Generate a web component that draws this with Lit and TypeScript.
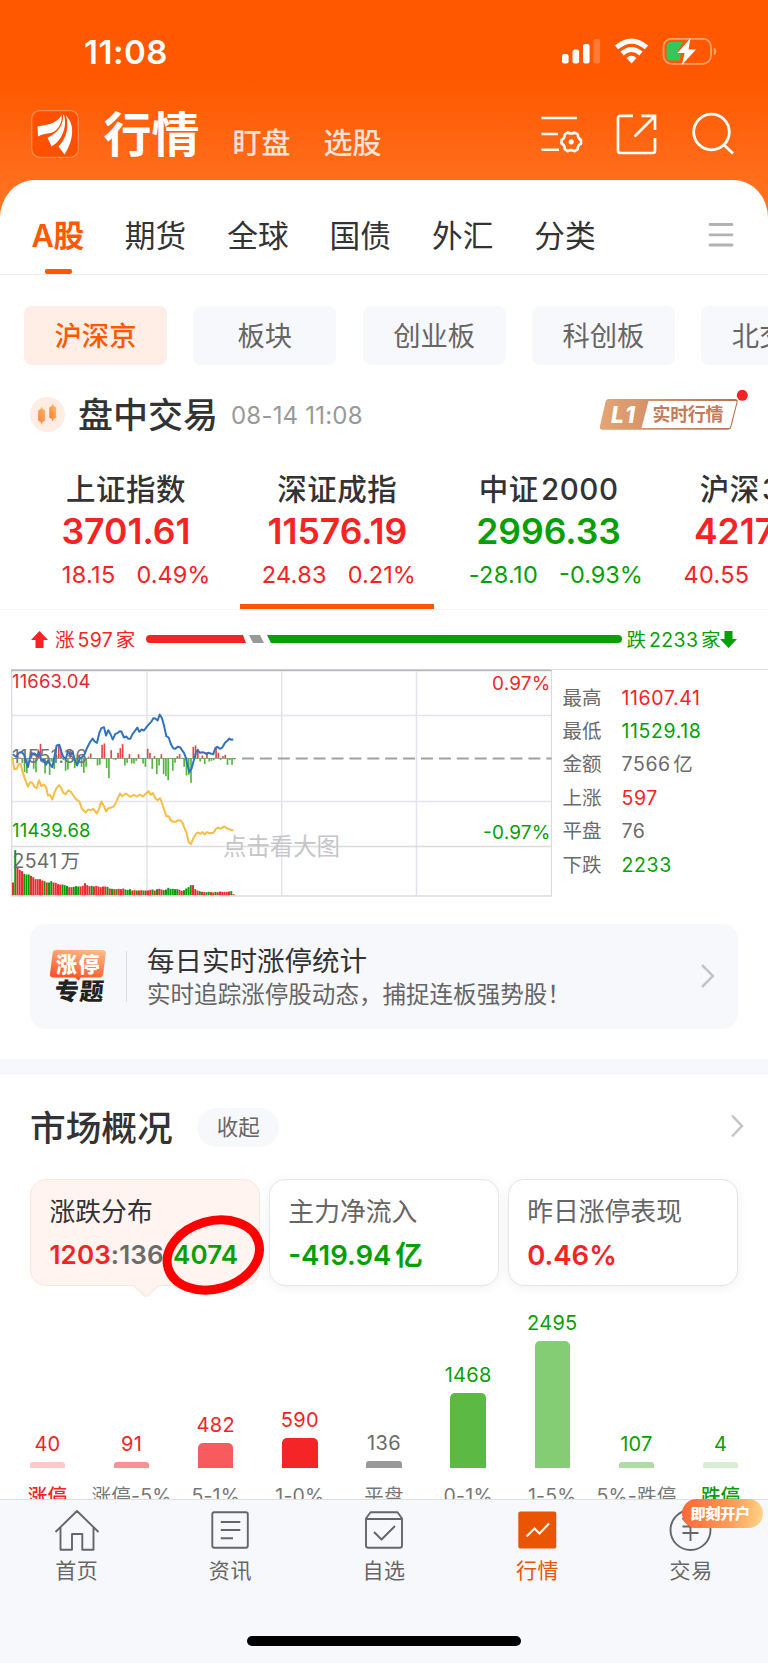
import { LitElement, html, css, svg } from "lit";
import { customElement } from "lit/decorators.js";
import { classMap } from "lit/directives/class-map.js";

const baseText = css`
  :host { display: block; font-family: Inter, "Noto Sans CJK SC", sans-serif; color: #333; }
  * { box-sizing: border-box; }
  svg { display: block; flex: none; }
  .up { color: #f52323; }
  .down { color: #06a006; }
  .flat { color: #6b6b6b; }
`;

@customElement("top-header")
class TopHeader extends LitElement {
  static styles = [baseText, css`
    .head { height: 179.5px; color: #fff; display: flex; flex-direction: column; }
    .status { height: 100px; padding: 3px 50px 0 84px; display: flex; align-items: center; justify-content: space-between; }
    .clock { font-size: 33px; font-weight: 600; line-height: 40px; letter-spacing: 0.5px; }
    .signals { margin-top: 1px; }
    .bar { display: flex; align-items: center; padding: 0 32px 0 31px; height: 68px; }
    .title { font-size: 48px; font-weight: 700; line-height: 60px; margin: 1px 0 0 24.500px; }
    .sub { font-size: 29px; font-weight: 500; line-height: 40px; opacity: .82; margin: 20px 0 0 33px; }
    .spacer { flex: 1; }
    .tools { display: flex; gap: 32px; align-items: center; margin: -1px 1px 0 0; }
  `];
  render() {
    return html`<header class="head">
      <div class="status">
        <span class="clock">11:08</span>
        <svg class="signals" width="156" height="28" viewBox="0 0 156 28">
          <rect x="0" y="16" width="6.600" height="9.5" rx="2.2" fill="#fff"/>
          <rect x="10.5" y="11.5" width="6.600" height="14" rx="2.2" fill="#fff"/>
          <rect x="21" y="6" width="6.600" height="19.500" rx="2.2" fill="#fff"/>
          <rect x="31.500" y="1" width="6.600" height="24.500" rx="2.2" fill="#fff" opacity=".22"/>
          <g fill="none" stroke="#fff" stroke-width="5">
            <path d="M54.500 9.300 Q69.500 -3.200 84.500 9.300"/>
            <path d="M60 15.500 Q69.500 7.500 79 15.500"/>
          </g>
          <path d="M64.500 20 Q69.500 15.700 74.500 20 L69.500 25.500Z" fill="#fff"/>
          <rect x="101.500" y="0.800" width="47.500" height="25" rx="8" fill="none" stroke="#fff" stroke-opacity=".42" stroke-width="1.800"/>
          <path d="M151.800 9.500 Q154.300 10.500 154.300 13.300 T151.800 17.500Z" fill="#fff" opacity=".45"/>
          <path d="M109 4 H121 L115 15 H119 L117.500 22.600 H109 Q104.500 22.600 104.500 18 V9 Q104.500 4 109 4Z" fill="#35c759"/>
          <path d="M128.500 0 L115.500 15 H122.600 L119.800 27 L134 11.500 H126.500Z" fill="#fff"/>
        </svg>
      </div>
      <div class="bar">
        <svg width="48" height="48" viewBox="0 0 48 48">
          <rect x=".7" y=".7" width="46.600" height="46.600" rx="8" fill="#ff4f00" stroke="#ff8c4d" stroke-width="1.300"/>
          <g fill="#fff">
            <path d="M6.500 16.500 C16 14.500 26 14 30.500 5 C32 13 26 21.500 20 23 C15 24 11 24 7 26.500Z"/>
            <path d="M32 4.800 C33 15 26 24 16.500 27.500 L20.500 36.500 C31 31 36.500 16 33 5Z"/>
            <path d="M35 5.500 C38.500 17 35 29 27.500 36.500 L33.500 44.500 C41 33 45.500 16 35 5.500Z"/>
          </g>
        </svg>
        <span class="title">行情</span><span class="sub">盯盘</span><span class="sub">选股</span>
        <span class="spacer"></span>
        <div class="tools">
          <svg width="43" height="42" viewBox="0 0 43 42" fill="none" stroke="#fff" stroke-width="2.600">
            <path d="M1.500 5H37M1.500 21H18M1.500 36.700H19"/>
            <path d="M27.700 19.500 Q31.200 21.500 34.700 19.500 L37.700 21.300 Q37.500 25.200 41 27 V30.500 Q37.500 32.300 37.700 36.200 L34.700 38.200 Q31.200 36 27.700 38.200 L24.700 36.200 Q25 32.300 21.500 30.500 V27 Q25 25.200 24.700 21.300Z" stroke-linejoin="round"/>
            <circle cx="31.200" cy="28.800" r="2.600" fill="#fff" stroke="none"/>
          </svg>
          <svg width="44" height="42" viewBox="0 0 44 42" fill="none" stroke="#fff" stroke-width="2.700">
            <path d="M18 2.800H5.500Q3 2.800 3 5.300V37.500Q3 40 5.500 40H37.500Q40 40 40 37.500V25"/>
            <path d="M26.500 2.800H40V17M39.500 3.500L19.500 23.500"/>
          </svg>
          <svg width="44" height="43" viewBox="0 0 44 43" fill="none" stroke="#fff" stroke-width="2.800">
            <circle cx="20.500" cy="20" r="17.800"/><path d="M33 33L42 41.500"/>
          </svg>
        </div>
      </div>
    </header>`;
  }
}

@customElement("market-tabs")
class MarketTabs extends LitElement {
  static styles = [baseText, css`
    .tabs { height: 95px; padding: 18px 34px 0 31.500px; border-bottom: 1.500px solid #ebecef; display: flex; align-items: center; gap: 41px; font-size: 30.700px; line-height: 40px; }
    .tab { position: relative; white-space: nowrap; }
    .on { color: #ff5800; font-weight: 600; width: 52.300px; letter-spacing: -0.300px; }
    .on::after { content: ""; position: absolute; left: 13.500px; top: 53.500px; width: 27px; height: 4.500px; border-radius: 2px; background: #ff5800; }
    .menu { margin: -1px 0 0 auto; }
    .chips { display: flex; gap: 26.300px; padding: 31.500px 0 0 24px; overflow: hidden; }
    .chip { flex: none; width: 143px; height: 58.500px; border-radius: 8px; background: #f7f8fb; color: #666; font-size: 27.300px; line-height: 62px; text-align: center; }
    .sel { background: #ffeee5; color: #ff5800; font-weight: 500; }
  `];
  render() {
    return html`
      <nav class="tabs">
        ${["A股", "期货", "全球", "国债", "外汇", "分类"].map((t, i) => html`<span class=${classMap({ tab: true, on: i === 0 })}>${t}</span>`)}
        <svg class="menu" width="26" height="26" viewBox="0 0 26 26" stroke="#b2b2b2" stroke-width="2.800" stroke-linecap="round"><path d="M2 2.500H24M2 12.800H24M2 23H24"/></svg>
      </nav>
      <div class="chips">
        ${["沪深京", "板块", "创业板", "科创板", "北交所"].map((t, i) => html`<span class=${classMap({ chip: true, sel: i === 0 })}>${t}</span>`)}
      </div>`;
  }
}

const indices = [
  { name: "上证指数", value: "3701.61", diff: "18.15", pct: "0.49%", tone: "up" },
  { name: "深证成指", value: "11576.19", diff: "24.83", pct: "0.21%", tone: "up" },
  { name: "中证 2000", value: "2996.33", diff: "-28.10", pct: "-0.93%", tone: "down" },
  { name: "沪深 300", value: "4217.62", diff: "40.55", pct: "0.97%", tone: "up" },
];

@customElement("index-board")
class IndexBoard extends LitElement {
  static styles = [baseText, css`
    .row { display: flex; align-items: center; height: 50px; margin-top: 25px; padding: 0 20px 0 30px; }
    .phase { font-size: 35px; font-weight: 500; line-height: 50px; margin-left: 12px; }
    .time { font-size: 24px; color: #999; margin: 1px 0 0 13px; letter-spacing: 0.200px; }
    .badge { margin-left: auto; }
    .list { display: flex; gap: 17.300px; padding: 0 0 0 29px; border-bottom: 1.500px solid #f5f5f6; overflow: hidden; height: 170px; }
    .item { flex: none; width: 194px; padding-top: 33px; display: flex; flex-direction: column; align-items: center; border-bottom: 5px solid transparent; }
    .active { border-bottom-color: #fa5806; }
    .name { font-size: 29.500px; font-weight: 500; line-height: 32px; letter-spacing: 0.500px; word-spacing: -6px; white-space: nowrap; }
    .value { font-size: 35.500px; font-weight: 600; line-height: 40px; margin-top: 7px; }
    .move { display: grid; grid-template-columns: 1fr 1fr; width: 100%; gap: 21px; font-size: 23.500px; line-height: 30px; margin-top: 8px; white-space: nowrap; }
    .diff { display: flex; justify-content: flex-end; letter-spacing: 0.300px; }
  `];
  render() {
    return html`
      <div class="row">
        <svg width="36" height="36" viewBox="0 0 36 36">
          <defs><linearGradient id="cg" x1="0" y1="1" x2="1" y2="0"><stop offset="0" stop-color="#fb7b35"/><stop offset="1" stop-color="#ffbd65"/></linearGradient></defs>
          <circle cx="17.500" cy="17.500" r="17.500" fill="#ffece3"/>
          <g fill="url(#cg)"><path d="M11.700 9.500l1 2.500 2.500 1.500v10l-2.500 1.500-1 2.500-1-2.500-2.500-1.500v-10l2.500-1.500z"/><path d="M22.700 6.500l1 2.500 2.500 1.500v10l-2.500 1.500-1 2.500-1-2.500-2.500-1.500v-10l2.500-1.500z"/></g>
        </svg>
        <span class="phase">盘中交易</span><span class="time">08-14 11:08</span>
        <svg class="badge" width="150" height="50" viewBox="598 390 150 50">
          <defs><linearGradient id="bg" x1="0" x2="1"><stop offset="0" stop-color="#e5a574"/><stop offset="1" stop-color="#b96f50"/></linearGradient></defs>
          <path d="M609 399H735Q738.500 399 737.500 402.500L731.500 426.500Q730.700 429.800 727.500 429.800H602.500Q599 429.800 600 426L605.500 402Q606.300 399 609 399Z" fill="url(#bg)"/>
          <path d="M648.500 401H735.800Q736.800 401 736.500 402.300L730.300 426.500Q730 428 728.500 428H641.500Z" fill="#fff"/>
          <text x="611" y="422.500" font-size="22.500" font-weight="800" font-style="italic" fill="#fff" textLength="24">L1</text>
          <text x="652.500" y="421.300" font-size="18" font-weight="700" fill="#c47b5a" textLength="71">实时行情</text>
          <circle cx="742.300" cy="395.300" r="5.500" fill="#f52323"/>
        </svg>
      </div>
      <div class="list">
        ${indices.map((x, i) => html`<div class=${classMap({ item: true, active: i === 1 })}>
          <span class="name">${x.name}</span>
          <span class="value ${x.tone}">${x.value}</span>
          <span class="move ${x.tone}"><span class="diff">${x.diff}</span><span>${x.pct}</span></span>
        </div>`)}
      </div>`;
  }
}

/* Intraday series, on a grid of three units to a pixel. */
const priceLine = "38,416 48,424 58,411 66,410 73,420 84,455 90,425 97,414 104,414 112,421 117,410 124,436 131,432 138,448 144,436 150,446 157,455 164,420 170,390 178,388 184,408 190,425 197,430 204,408 211,419 218,409 224,432 231,450 240,428 248,424 254,416 262,395 270,380 278,369 284,378 291,382 298,352 304,338 312,335 318,360 325,344 332,357 338,372 346,355 352,353 359,347 364,348 372,366 379,363 385,370 391,370 398,355 405,346 412,336 418,349 425,342 432,345 440,334 447,326 453,320 460,308 466,309 473,315 479,297 486,308 492,330 499,362 506,366 512,384 519,398 526,400 533,394 540,395 546,404 552,412 558,428 563,450 568,470 575,458 582,432 588,410 593,404 600,412 607,410 614,412 620,416 625,412 632,414 640,416 646,398 652,394 660,400 667,396 675,382 682,376 688,369 694,373 700,372";
const averageLine = "36,425 43,461 50,460 56,446 62,445 68,470 76,494 84,513 90,500 97,502 104,515 110,518 117,494 124,512 131,507 138,515 144,540 150,538 157,552 164,530 171,515 178,509 184,519 190,532 197,536 204,525 212,528 220,540 228,551 238,558 246,580 257,591 264,582 272,584 280,580 290,594 297,580 304,558 312,572 318,588 324,579 332,577 342,572 350,556 360,534 366,542 378,534 390,544 402,538 410,543 420,537 428,543 434,538 446,527 452,538 459,533 466,549 473,554 480,548 486,562 492,582 499,602 506,602 512,615 520,619 527,619 534,614 541,615 547,620 552,634 560,653 566,680 573,686 580,668 588,655 594,651 602,655 607,650 614,657 620,650 632,653 640,652 648,640 655,636 660,640 673,633 680,638 690,642 700,645";
const pulses = [-3,0,8,2,-14,-42,-45,0,20,-32,-42,26,43,-6,-46,2,-50,-10,-32,10,38,28,-6,-38,-34,28,-8,-30,-22,10,-26,-44,-26,4,14,0,-2,-22,-20,40,44,-30,-60,24,-4,-6,16,30,42,-22,-14,12,-16,-16,-8,12,-2,-16,-26,28,16,-32,6,-48,-22,12,-48,-54,-66,-2,-38,-14,6,12,0,-26,-52,-50,-74,34,38,28,-10,8,-18,18,-10,-8,-6,30,16,-6,6,10,-20,-6,-20,-4];
const volumes = [38,135,84,76,72,64,62,62,58,54,48,48,48,44,42,38,38,42,38,37,33,32,32,30,28,24,24,25,27,26,26,28,36,30,27,28,26,28,26,24,26,26,25,20,19,18,18,19,18,20,17,16,18,14,15,14,14,15,14,14,14,16,17,14,18,19,17,15,17,22,19,19,18,18,16,13,15,20,24,30,30,18,14,12,10,9,9,10,9,8,10,9,11,10,10,10,11,12,3];
const greenVolumes = new Set([1,5,6,7,14,16,17,22,23,24,27,28,29,35,42,44,46,50,51,52,55,58,62,64,67,68,69,70,71,72,73,76,77,78,79,83,86,87,90,97]);

@customElement("intraday-chart")
class IntradayChart extends LitElement {
  static styles = [baseText, css`
    .breadth { height: 59px; display: flex; align-items: center; padding: 1px 0 0 30px; font-size: 19.500px; line-height: 28px; white-space: nowrap; }
    .breadth > span { letter-spacing: 0.450px; word-spacing: -3.500px; flex: none; }
    .rise { margin-left: 6px; width: 85px; }
    .bar { margin: -2px 4.500px 0 6px; }
    .fall { width: 92px; }
    .panel { display: flex; height: 228px; }
    .stats { flex: 1; border-top: 1.500px solid #dddde3; margin-left: -1px; display: grid; grid-template-columns: 59px 1fr; grid-auto-rows: 33.400px; align-items: center; font-size: 19.500px; line-height: 28px; color: #6b6b6b; padding: 11.500px 0 0 11.500px; }
    .num { letter-spacing: 0.600px; word-spacing: -3.500px; }
  `];
  render() {
    const rows = [["最高", "11607.41", "up"], ["最低", "11529.18", "down"], ["金额", "7566 亿", "flat"], ["上涨", "597", "up"], ["平盘", "76", "flat"], ["下跌", "2233", "down"]];
    return html`
      <div class="breadth">
        <svg width="19" height="19" viewBox="0 0 19 19"><path d="M9.500 1L18 10H13.500V18H5.500V10H1Z" fill="#f52323"/></svg>
        <span class="rise up">涨 597 家</span>
        <svg class="bar" width="476" height="8" viewBox="0 0 476 8">
          <path d="M4 0H97L100 8H4A4 4 0 0 1 4 0Z" fill="#f52323"/><path d="M103 0H114L118 8H107Z" fill="#999"/><path d="M121 0H472A4 4 0 0 1 472 8H125Z" fill="#06a006"/>
        </svg>
        <span class="fall down">跌 2233 家</span>
        <svg width="19" height="19" viewBox="0 0 19 19"><path d="M9.500 18L18 9H13.500V1H5.500V9H1Z" fill="#06a006"/></svg>
      </div>
      <div class="panel">
        <svg width="552" height="228" viewBox="0 668.500 552 228">
          <g fill="none" stroke="#e3e4ed" stroke-width="1.500">
            <path d="M12 715H551M12 801H551M147 671V895M281.700 671V895M416.500 671V895"/>
            <path d="M11.700 669V895.500H551.500V669M12 846H551" stroke="#dadbe0" stroke-width="1.300"/>
          </g>
          <path d="M11 669.700H551.500" stroke="#b9bbc1" stroke-width="2"/>
          <path d="M242 758H551.500" stroke="#a0a0a0" stroke-width="2" stroke-dasharray="12 5.900"/>
          <g transform="translate(0 615) scale(.33333)">
            ${volumes.map((v, i) => svg`<rect x=${36 + i * 6.75} y=${839 - v} width="6" height=${v} fill=${greenVolumes.has(i) ? "#0a9e0a" : "#ee2b2f"}/>`)}
            ${pulses.map((v, i) => svg`<rect x=${37 + i * 6.84} y=${v > 0 ? 428 - v : 428} width="5" height=${Math.max(2, Math.abs(v))} fill=${v > 0 ? "#e2484a" : "#56b443"}/>`)}
            <path d="M36 429H708" stroke="#7b9a62" stroke-width="2.500"/>
          </g>
          <text x="12" y="762" font-size="19" fill="#777" textLength="75">11551.36</text>
          <g transform="translate(0 615) scale(.33333)" fill="none" stroke-width="6" stroke-linejoin="round">
            <polyline points=${averageLine} stroke="#f8bd45"/><polyline points=${priceLine} stroke="#3273bd"/>
          </g>
          <text x="12" y="687.500" font-size="18.500" fill="#e8262e" textLength="78.500">11663.04</text>
          <text x="12" y="836.700" font-size="18.500" fill="#06a006" textLength="78.500">11439.68</text>
          <text x="12.500" y="867" font-size="19.500" fill="#6b6b6b" letter-spacing=".3">2541<tspan dx="3">万</tspan></text>
          <text x="550.500" y="689" font-size="19" fill="#f02a2a" text-anchor="end" textLength="58.500">0.97%</text>
          <text x="550.500" y="838" font-size="19" fill="#06a006" text-anchor="end" textLength="67.500">-0.97%</text>
          <text x="223" y="854.500" font-size="23.500" fill="#c6c6c9" textLength="117">点击看大图</text>
        </svg>
        <div class="stats">
          ${rows.map(r => html`<span>${r[0]}</span><span class="num ${r[2]}">${r[1]}</span>`)}
        </div>
      </div>`;
  }
}

@customElement("limit-promo")
class LimitPromo extends LitElement {
  static styles = [baseText, css`
    .card { margin: 27px 30px 0; height: 105.500px; border-radius: 15px; background: #f7f8fb; display: flex; align-items: center; padding: 0 22px 0 20px; }
    .rule { width: 1px; height: 51px; background: #dcdde1; margin: 0 20px 0 19px; }
    .copy { flex: 1; display: flex; flex-direction: column; white-space: nowrap; padding-top: 2px; }
    .title { font-size: 27.500px; line-height: 36px; }
    .text { font-size: 23.550px; line-height: 32px; color: #666; }
    .band { height: 16px; background: #f7f8fb; margin-top: 29.500px; }
  `];
  render() {
    return html`<div class="card">
      <svg width="57" height="54" viewBox="50 950 57 54">
        <defs><linearGradient id="lg" x1="1" y1="0" x2="0.700" y2="1"><stop offset="0" stop-color="#ffc190"/><stop offset=".6" stop-color="#ff8050"/><stop offset="1" stop-color="#ff5528"/></linearGradient></defs>
        <path d="M56 951H102.500Q106.300 951 105.800 954.500L103.200 974.500Q102.700 978.500 99 978.500H81L78.500 981.500L75 978.500H53Q49.500 978.500 50 975L52.600 954Q53 951 56 951Z" fill="url(#lg)"/>
        <text x="56" y="973.200" font-size="21" font-weight="900" fill="#fff" textLength="43.500">涨停</text>
        <text x="53.500" y="1001" font-size="24" font-weight="900" fill="#222" transform="translate(88 0) skewX(-5)" textLength="49">专题</text>
      </svg>
      <span class="rule"></span>
      <div class="copy"><span class="title">每日实时涨停统计</span><span class="text">实时追踪涨停股动态，捕捉连板强势股！</span></div>
      <svg width="16" height="26" viewBox="0 0 16 26" fill="none" stroke="#c3c4c8" stroke-width="2.500"><path d="M2 2L13 13L2 24"/></svg>
    </div>
    <div class="band"></div>`;
  }
}

const buckets = [
  { n: 40, label: "涨停", h: 6, fill: "#fcc8c9", tone: "up", strong: true },
  { n: 91, label: "涨停-5%", h: 6, fill: "#fa9193", tone: "up" },
  { n: 482, label: "5-1%", h: 24.7, fill: "#f75b5d", tone: "up" },
  { n: 590, label: "1-0%", h: 30, fill: "#f52426", tone: "up" },
  { n: 136, label: "平盘", h: 7, fill: "#999", tone: "flat" },
  { n: 1468, label: "0-1%", h: 74.5, fill: "#5cb944", tone: "down" },
  { n: 2495, label: "1-5%", h: 126.3, fill: "#85cd75", tone: "down" },
  { n: 107, label: "5%-跌停", h: 6, fill: "#addda2", tone: "down" },
  { n: 4, label: "跌停", h: 6, fill: "#d6eed1", tone: "down", strong: true },
];

@customElement("market-overview")
class MarketOverview extends LitElement {
  static styles = [baseText, css`
    .head { display: flex; align-items: center; height: 56px; margin-top: 25px; padding: 0 24px 0 30px; }
    .title { font-size: 35.700px; font-weight: 500; line-height: 50px; padding-top: 1px; }
    .fold { margin-left: 24.500px; width: 82px; height: 39.500px; border-radius: 20px; background: #f7f8fb; color: #666; font-size: 21.500px; line-height: 39px; text-align: center; }
    .more { margin: -4px 0 0 auto; }
    .cards { display: flex; gap: 8.500px; padding: 0 30px; margin-top: 23px; }
    .card { position: relative; flex: 1; height: 107px; border-radius: 16px; border: 1.200px solid #e6e6e6; box-shadow: 0 2px 12px rgba(0,0,0,.06); background: #fff; padding: 14.500px 0 0 18.500px; white-space: nowrap; }
    .sel { background: #fff4f0; border-color: #fde6dc; box-shadow: none; }
    .label { display: block; font-size: 25.800px; line-height: 36px; color: #666; }
    .sel .label { color: #333; }
    .value { display: block; font-size: 27.500px; font-weight: 600; line-height: 36px; margin-top: 6.500px; word-spacing: -3px; }
    .sel .value { font-size: 26px; letter-spacing: 0.100px; word-spacing: 0; }
    .notch { position: absolute; left: 101px; top: 104.500px; }
    .ring { position: absolute; left: 126.500px; top: 30px; }
    .gap { margin-left: 1px; }
    .bars { height: 182px; display: grid; grid-template-columns: repeat(9, 84.150px); padding-left: 5.400px; align-items: end; justify-items: center; }
    .col { display: flex; flex-direction: column; align-items: center; font-size: 20px; line-height: 24px; letter-spacing: 0.300px; }
    .bar { width: 35.500px; border-radius: 5px 5px 0 0; margin-top: 6px; }
    .small { border-radius: 3px 3px 0 0; }
    .names { display: grid; grid-template-columns: repeat(9, 84.150px); padding: 16px 0 0 5.400px; justify-items: center; font-size: 19.500px; line-height: 24px; color: #777; white-space: nowrap; letter-spacing: 0.200px; }
    .strong { font-weight: 500; }
  `];
  render() {
    return html`
      <div class="head"><span class="title">市场概况</span><span class="fold">收起</span>
        <svg class="more" width="14" height="24" viewBox="0 0 14 24" fill="none" stroke="#c3c4c8" stroke-width="2.500"><path d="M2 1.500L12 12L2 22.500"/></svg>
      </div>
      <div class="cards">
        <div class="card sel">
          <span class="label">涨跌分布</span>
          <span class="value"><span class="up">1203</span><span class="flat">:136</span><span class="flat">:</span><span class="gap down">4074</span></span>
          <svg class="notch" width="28" height="14" viewBox="0 0 28 14"><path d="M1 1.300L12 11.500Q14 13 16 11.500L27 1.300" fill="#fff4f0" stroke="#fde6dc" stroke-width="1.200"/><path d="M0 0H28V1.200H0Z" fill="#fff4f0"/></svg>
          <svg class="ring" width="110" height="90" viewBox="158 1210 110 90"><ellipse cx="213.300" cy="1255" rx="47" ry="34" fill="none" stroke="#f00" stroke-width="9" transform="rotate(-16 213.300 1255)"/></svg>
        </div>
        <div class="card"><span class="label">主力净流入</span><span class="value down">-419.94 亿</span></div>
        <div class="card"><span class="label">昨日涨停表现</span><span class="value up">0.46%</span></div>
      </div>
      <div class="bars">${buckets.map(b => html`<div class="col"><span class=${b.tone}>${b.n}</span><span class=${classMap({ bar: true, small: b.h < 10 })} style="height:${b.h}px;background:${b.fill}"></span></div>`)}</div>
      <div class="names">${buckets.map(b => html`<span class=${b.strong ? `strong ${b.tone}` : ""}>${b.label}</span>`)}</div>`;
  }
}

@customElement("bottom-nav")
class BottomNav extends LitElement {
  static styles = [baseText, css`
    .nav { height: 164.500px; background: #f7f8fb; border-top: 1.500px solid #dfe0e3; display: flex; flex-direction: column; align-items: center; justify-content: space-between; padding-bottom: 17px; }
    .items { display: grid; grid-template-columns: repeat(5, 1fr); width: 100%; padding-top: 8.500px; }
    .item { position: relative; display: flex; flex-direction: column; align-items: center; gap: 4px; font-size: 21px; line-height: 30px; color: #666; letter-spacing: 0.600px; }
    .on { color: #ea5504; }
    .home { width: 273.500px; height: 10px; border-radius: 5px; background: #000; }
    .promo { position: absolute; left: 67.500px; top: -9.500px; width: 81px; height: 29.500px; border-radius: 15px; background: linear-gradient(100deg, #ff6538, #ff9a55 60%, #ffd98a); color: #fff; font-size: 15.200px; font-weight: 900; line-height: 29.500px; padding-left: 8.500px; letter-spacing: -0.300px; white-space: nowrap; }
  `];
  render() {
    const line = "#666";
    return html`<footer class="nav">
      <div class="items">
        <span class="item"><svg width="46" height="44" viewBox="0 0 46 44" fill="none" stroke=${line} stroke-width="1.900" stroke-linejoin="round"><path d="M1.500 24L23 3L44.500 24M6.500 19.500V41.700H18V26H28.300V41.700H39.500V19.500"/></svg>首页</span>
        <span class="item"><svg width="46" height="44" viewBox="0 0 46 44" fill="none" stroke=${line} stroke-width="1.900"><rect x="5.300" y="4.300" width="35.500" height="35.500" rx="2"/><path d="M13.800 14H33.300M13.800 22H33.300M13.800 30.300H26"/></svg>资讯</span>
        <span class="item"><svg width="46" height="44" viewBox="0 0 46 44" fill="none" stroke=${line} stroke-width="1.900" stroke-linejoin="round"><path d="M5 10.500L9.500 4.300H36.500L41 10.500V37.500Q41 39.800 38.700 39.800H7.300Q5 39.800 5 37.500ZM5 11H41M13 24L20.500 31.500L34 18"/></svg>自选</span>
        <span class="item on"><svg width="46" height="44" viewBox="0 0 46 44" fill="none"><rect x="3.300" y="3.500" width="38" height="37" rx="2" fill="#ea5504"/><path d="M11.500 28.500L19.500 20.500L24.500 25.500L34 15.500" stroke="#fff" stroke-width="2"/></svg>行情</span>
        <span class="item"><svg width="46" height="44" viewBox="0 0 46 44" fill="none" stroke=${line} stroke-width="1.900"><circle cx="22.500" cy="22" r="20"/><path d="M14.500 10L22.500 18.500L30.500 10M14.500 18.500H30.500M14.500 25H30.500M22.500 18.500V33"/></svg>交易<span class="promo">即刻开户</span></span>
      </div>
      <div class="home"></div>
    </footer>`;
  }
}

@customElement("app-root")
class AppRoot extends LitElement {
  static styles = [baseText, css`
    :host { width: 768px; }
    .page { height: 1663px; overflow: hidden; display: flex; flex-direction: column; background: linear-gradient(#ff5800 0, #ff5800 80px, #ff6e1c 180px, #ff7626 218px); }
    .sheet { flex: 1; min-height: 0; overflow: hidden; background: #fff; border-radius: 34px 34px 0 0 / 38px 38px 0 0; }
  `];
  render() {
    return html`<div class="page">
      <top-header></top-header>
      <main class="sheet">
        <market-tabs></market-tabs>
        <index-board></index-board>
        <intraday-chart></intraday-chart>
        <limit-promo></limit-promo>
        <market-overview></market-overview>
      </main>
      <bottom-nav></bottom-nav>
    </div>`;
  }
}
